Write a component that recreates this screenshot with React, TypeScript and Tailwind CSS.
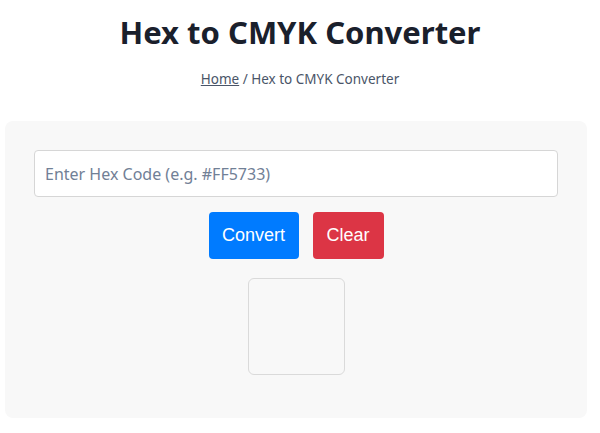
import React, { useState } from 'react';

const App: React.FC = () => {
  const [hex, setHex] = useState('');

  return (
    <div className="min-h-[433px] bg-white" style={{ fontFamily: '"Noto Sans", "Open Sans", sans-serif' }}>
      {/* Header */}
      <div className="pt-[11px] text-center">
        <h1 className="text-[31px] font-bold leading-[42px] text-[#1a202c]">Hex to CMYK Converter</h1>
        <p className="mt-[16px] text-[13.5px] text-[#4a5568]">
          <a href="#" className="underline text-[#4a5568]">Home</a> / Hex to CMYK Converter
        </p>
      </div>

      {/* Converter panel */}
      <div className="ml-[5px] mt-[32px] w-[582px] rounded-lg bg-[#f8f8f8] px-[29px] pt-[29px] pb-[43px]">
        <input
          type="text"
          value={hex}
          onChange={(e) => setHex(e.target.value)}
          placeholder="Enter Hex Code (e.g. #FF5733)"
          className="block h-[47px] w-full rounded border border-[#d6d6d6] bg-white px-[10px] text-[16px] text-[#333] placeholder:text-[#718096] outline-none"
        />
        <div className="mt-[15px] flex justify-center gap-[14px]" style={{ fontFamily: '"Liberation Sans", Arial, sans-serif' }}>
          <button className="h-[47px] w-[90px] rounded bg-[#007bff] text-[18px] text-white">Convert</button>
          <button className="h-[47px] w-[71px] rounded bg-[#dc3545] text-[18px] text-white">Clear</button>
        </div>
        <div className="mx-auto mt-[19px] h-[97px] w-[97px] rounded-md border border-[#dadada] bg-[#f8f8f8]" />
      </div>
    </div>
  );
};

export default App;
